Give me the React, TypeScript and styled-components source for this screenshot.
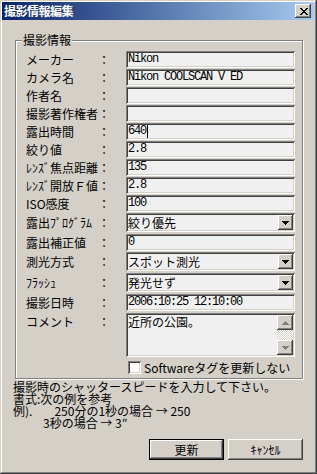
import React from "react";
import styled, { createGlobalStyle } from "styled-components";

const FACE = "#D4D0C8";
const UI = `"Noto Sans CJK JP", "Noto Sans", sans-serif`;
const MONO = `"Liberation Mono", "Noto Sans CJK JP", monospace`;

const raised = `box-shadow: inset -1px -1px #404040, inset 1px 1px #FFFFFF, inset -2px -2px #808080, inset 2px 2px ${FACE};`;
const sunken = `box-shadow: inset 1px 1px #808080, inset -1px -1px #FFFFFF, inset 2px 2px #404040, inset -2px -2px ${FACE};`;

const GlobalStyle = createGlobalStyle`
  html, body { margin: 0; padding: 0; background: ${FACE}; }
  body { font-family: ${UI}; font-size: 12px; color: #000; }
  * { box-sizing: border-box; }
`;

const Window = styled.div`
  width: 317px;
  height: 474px;
  background: ${FACE};
  box-shadow: inset -1px -1px #404040, inset 1px 1px ${FACE}, inset -2px -2px #808080, inset 2px 2px #FFFFFF;
  padding: 2px 3px 3px 2px;
  display: flex;
  flex-direction: column;
`;

const TitleBar = styled.div`
  height: 18px;
  display: flex;
  align-items: center;
  justify-content: space-between;
  padding: 0 3px 0 2px;
  background: linear-gradient(to right, #0A246A, #A6CAF0);
`;

const Title = styled.span`
  color: #fff;
  font-weight: 700;
  font-size: 12px;
  line-height: 14px;
  letter-spacing: -0.5px;
`;

const CloseButton = styled.div`
  width: 16px;
  height: 14px;
  background: ${FACE};
  ${raised}
  display: flex;
  align-items: center;
  justify-content: center;
  padding-left: 1px;
`;

const Body = styled.div`
  flex: 1;
  display: flex;
  flex-direction: column;
  padding: 20px 11px 0 13px;
`;

const GroupBox = styled.div`
  position: relative;
  border: 1px solid #808080;
  box-shadow: inset 1px 1px #FFFFFF, 1px 1px #FFFFFF;
  padding: 10px 7px 2px 10px;
`;

const Legend = styled.span`
  position: absolute;
  top: -8px;
  left: 6px;
  padding: 0 1px;
  background: ${FACE};
  font-size: 12px;
  line-height: 14px;
`;

const Row = styled.div<{ $h: number; $box: number; $top?: number }>`
  display: grid;
  grid-template-columns: 72px 28px 169px;
  align-items: start;
  height: ${(p) => p.$h}px;
  padding-top: ${(p) => p.$top ?? 0}px;
  --box: ${(p) => p.$box}px;
`;

const Label = styled.span`
  font-size: 12px;
  line-height: var(--box);
  white-space: nowrap;
`;

const Colon = styled.span`
  font-size: 12px;
  line-height: var(--box);
`;

const TextBox = styled.div<{ $mono?: boolean }>`
  height: 17px;
  background: #F0F0F0;
  ${sunken}
  display: flex;
  align-items: center;
  padding: 0 2px;
  white-space: pre;
  overflow: hidden;
  font-family: ${(p) => (p.$mono ? MONO : UI)};
  font-size: 12px;
  letter-spacing: ${(p) => (p.$mono ? "-1.2px" : "0")};
  line-height: 13px;
`;

const Caret = styled.span`
  display: inline-block;
  width: 1px;
  height: 13px;
  margin-left: 1px;
  background: #000;
`;

const ComboBox = styled.div`
  height: 19px;
  background: #F0F0F0;
  ${sunken}
  display: flex;
  align-items: stretch;
  padding: 2px;
`;

const ComboText = styled.span`
  flex: 1;
  display: flex;
  align-items: center;
  font-size: 12px;
  line-height: 15px;
  white-space: nowrap;
`;

const ArrowButton = styled.div`
  width: 15px;
  height: 15px;
  background: ${FACE};
  ${raised}
  display: flex;
  align-items: center;
  justify-content: center;
`;

const TextArea = styled.div`
  height: 44px;
  background: #F0F0F0;
  ${sunken}
  display: flex;
  padding: 2px;
`;

const AreaText = styled.div`
  flex: 1;
  font-size: 12px;
  line-height: 14px;
`;

const ScrollBar = styled.div`
  width: 16px;
  display: flex;
  flex-direction: column;
`;

const ScrollButton = styled.div`
  width: 16px;
  height: 15px;
  background: ${FACE};
  ${raised}
  display: flex;
  align-items: center;
  justify-content: center;
`;

const Track = styled.div`
  flex: 1;
  background: repeating-conic-gradient(#FFFFFF 0 25%, ${FACE} 0 50%) 0 0 / 2px 2px;
`;

const CheckCell = styled.label`
  grid-column: 3;
  display: flex;
  align-items: center;
  gap: 3px;
  height: 18px;
  padding-left: 2px;
  font-size: 12px;
  white-space: nowrap;
`;

const CheckBox = styled.span`
  width: 13px;
  height: 13px;
  background: #FFFFFF;
  ${sunken}
`;

const Info = styled.div`
  margin: 2px 0 0 -2px;
  display: flex;
  flex-direction: column;
`;

const InfoLine = styled.div<{ $indent?: number }>`
  font-size: 12px;
  line-height: 12px;
  height: 12px;
  white-space: pre;
  padding-left: ${(p) => p.$indent ?? 0}px;
`;

const Gap = styled.span<{ $w: number }>`
  display: inline-block;
  width: ${(p) => p.$w}px;
`;

const ButtonRow = styled.div`
  margin-top: 10px;
  display: flex;
  justify-content: flex-end;
  gap: 4px;
`;

const Button = styled.div<{ $default?: boolean }>`
  width: 75px;
  height: 21px;
  background: ${FACE};
  display: flex;
  align-items: center;
  justify-content: center;
  font-size: 12px;
  line-height: 14px;
  ${(p) => (p.$default ? `border: 1px solid #000; ${raised}` : raised)}
`;

const DownArrow = ({ color = "#000" }: { color?: string }) => (
  <svg width="7" height="4" viewBox="0 0 7 4" shapeRendering="crispEdges">
    <path d="M0 0h7v1h-1v1h-1v1h-1v1h-1v-1h-1v-1h-1v-1h-1z" fill={color} />
  </svg>
);

const UpArrow = ({ color = "#000" }: { color?: string }) => (
  <svg width="7" height="4" viewBox="0 0 7 4" shapeRendering="crispEdges">
    <path d="M3 0h1v1h1v1h1v1h1v1h-7v-1h1v-1h1v-1h1z" fill={color} />
  </svg>
);

const CloseGlyph = () => (
  <svg width="8" height="7" viewBox="0 0 8 7" shapeRendering="crispEdges">
    <path
      d="M0 0h2v1h1v1h2v-1h1v-1h2v1h-1v1h-1v1h-1v1h1v1h1v1h1v1h-2v-1h-1v-1h-2v1h-1v1h-2v-1h1v-1h1v-1h1v-1h-1v-1h-1v-1h-1z"
      fill="#000"
    />
  </svg>
);

type Field =
  | { label: string; kind: "text"; value: string; mono?: boolean; caret?: boolean }
  | { label: string; kind: "combo"; value: string };

const fields: Field[] = [
  { label: "メーカー", kind: "text", value: "Nikon", mono: true },
  { label: "カメラ名", kind: "text", value: "Nikon COOLSCAN V ED", mono: true },
  { label: "作者名", kind: "text", value: "" },
  { label: "撮影著作権者", kind: "text", value: "" },
  { label: "露出時間", kind: "text", value: "640", mono: true, caret: true },
  { label: "絞り値", kind: "text", value: "2.8", mono: true },
  { label: "ﾚﾝｽﾞ焦点距離", kind: "text", value: "135", mono: true },
  { label: "ﾚﾝｽﾞ開放Ｆ値", kind: "text", value: "2.8", mono: true },
  { label: "ISO感度", kind: "text", value: "100", mono: true },
  { label: "露出ﾌﾟﾛｸﾞﾗﾑ", kind: "combo", value: "絞り優先" },
  { label: "露出補正値", kind: "text", value: "0", mono: true },
  { label: "測光方式", kind: "combo", value: "スポット測光" },
  { label: "ﾌﾗｯｼｭ", kind: "combo", value: "発光せず" },
  { label: "撮影日時", kind: "text", value: "2006:10:25 12:10:00", mono: true },
];

export default function App() {
  return (
    <>
      <GlobalStyle />
      <Window>
        <TitleBar>
          <Title>撮影情報編集</Title>
          <CloseButton>
            <CloseGlyph />
          </CloseButton>
        </TitleBar>
        <Body>
          <GroupBox>
            <Legend>撮影情報</Legend>
            {fields.map((f) =>
              f.kind === "combo" ? (
                <Row key={f.label} $h={21} $box={19}>
                  <Label>{f.label}</Label>
                  <Colon>：</Colon>
                  <ComboBox>
                    <ComboText>{f.value}</ComboText>
                    <ArrowButton>
                      <DownArrow />
                    </ArrowButton>
                  </ComboBox>
                </Row>
              ) : (
                <Row key={f.label} $h={18} $box={17}>
                  <Label>{f.label}</Label>
                  <Colon>：</Colon>
                  <TextBox $mono={f.mono}>
                    {f.value}
                    {f.caret && <Caret />}
                  </TextBox>
                </Row>
              )
            )}
            <Row $h={46} $box={17} $top={1}>
              <Label>コメント</Label>
              <Colon>：</Colon>
              <TextArea>
                <AreaText>近所の公園。</AreaText>
                <ScrollBar>
                  <ScrollButton>
                    <UpArrow color="#808080" />
                  </ScrollButton>
                  <Track />
                  <ScrollButton>
                    <DownArrow color="#808080" />
                  </ScrollButton>
                </ScrollBar>
              </TextArea>
            </Row>
            <Row $h={18} $box={18}>
              <CheckCell>
                <CheckBox />
                Softwareタグを更新しない
              </CheckCell>
            </Row>
          </GroupBox>
          <Info>
            <InfoLine>撮影時のシャッタースピードを入力して下さい。</InfoLine>
            <InfoLine>書式:次の例を参考</InfoLine>
            <InfoLine>
              例).<Gap $w={22} />250分の1秒の場合 → 250
            </InfoLine>
            <InfoLine $indent={30}>3秒の場合 → 3″</InfoLine>
          </Info>
          <ButtonRow>
            <Button $default>更新</Button>
            <Button>ｷｬﾝｾﾙ</Button>
          </ButtonRow>
        </Body>
      </Window>
    </>
  );
}
